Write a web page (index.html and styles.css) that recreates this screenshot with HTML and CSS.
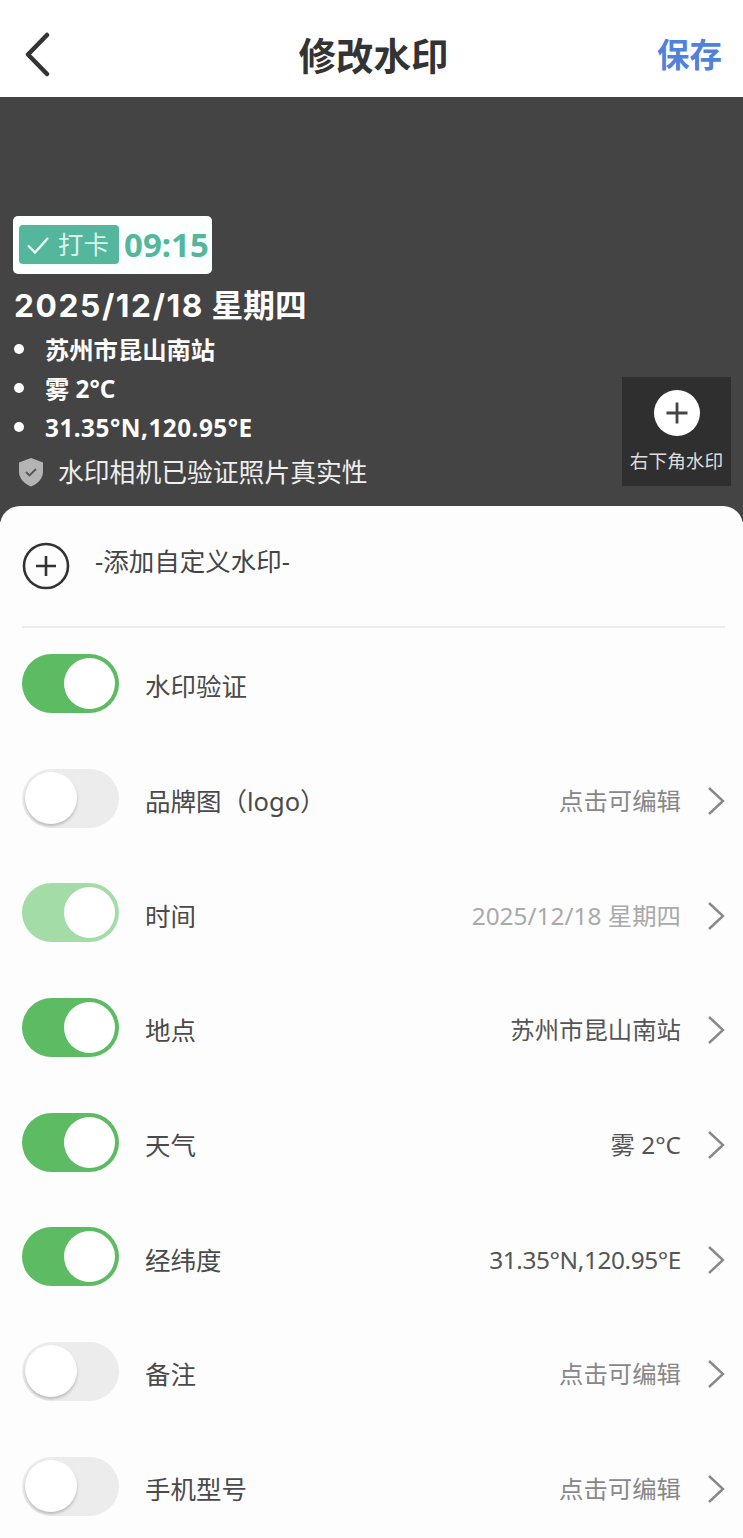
FILE: index.html
```html
<!DOCTYPE html>
<html lang="zh">
<head>
<meta charset="utf-8">
<title>修改水印</title>
<link rel="stylesheet" href="styles.css">
</head>
<body>
<div class="page">
  <header class="topbar">
    <svg class="back" viewBox="0 0 30 46" width="30" height="46"><path d="M25 4 L6 23.500 L25 43" fill="none" stroke="#333" stroke-width="4.500" stroke-linecap="round" stroke-linejoin="round"/></svg>
    <h1 class="title">修改水印</h1>
    <span class="save">保存</span>
  </header>
  <section class="preview">
    <div class="stamp">
      <div class="badge">
        <span class="badge-tag">
          <svg viewBox="0 0 28 24" width="28" height="24"><path d="M4 12.500 L11 19.500 L24 5" fill="none" stroke="#eafaf5" stroke-width="2.400"/></svg>
          <span>打卡</span>
        </span>
        <span class="badge-time">09:15</span>
      </div>
      <div class="date"><span class="date-num">2025/12/18</span> 星期四</div>
      <ul class="facts">
        <li>苏州市昆山南站</li>
        <li>雾 2°C</li>
        <li class="coords">31.35°N,120.95°E</li>
      </ul>
      <div class="verified">
        <svg viewBox="0 0 26 30" width="26" height="30"><path d="M13 1 L25 5.500 V15 C25 22 19 27 13 29.500 C7 27 1 22 1 15 V5.500 Z" fill="#b4b4b4"/><path d="M8 15 L11.500 18.500 L18 12" fill="none" stroke="#555" stroke-width="1.800"/></svg>
        <span>水印相机已验证照片真实性</span>
      </div>
    </div>
    <div class="corner">
      <span class="corner-plus"><svg viewBox="0 0 24 24" width="24" height="24"><path d="M12 1.500 V22.500 M1.500 12 H22.500" stroke="#444" stroke-width="2.800"/></svg></span>
      <span class="corner-label">右下角水印</span>
    </div>
  </section>
  <section class="sheet">
    <div class="add-row">
      <svg viewBox="0 0 48 48" width="48" height="48"><circle cx="24" cy="24" r="22" fill="none" stroke="#333" stroke-width="2.600"/><path d="M24 14 V34 M14 24 H34" stroke="#333" stroke-width="2.600"/></svg>
      <span class="add-label">-添加自定义水印-</span>
    </div>
    <div class="rows">
      <div class="row">
        <span class="switch on"><i></i></span><span class="name">水印验证</span>
      </div>
      <div class="row">
        <span class="switch"><i></i></span><span class="name">品牌图（logo）</span>
        <span class="value muted">点击可编辑</span><svg class="chev" viewBox="0 0 18 30" width="18" height="30"><path d="M2 2 L16 15 L2 28" fill="none" stroke="#888" stroke-width="2.400"/></svg>
      </div>
      <div class="row">
        <span class="switch on faded"><i></i></span><span class="name">时间</span>
        <span class="value faint">2025/12/18 星期四</span><svg class="chev" viewBox="0 0 18 30" width="18" height="30"><path d="M2 2 L16 15 L2 28" fill="none" stroke="#888" stroke-width="2.400"/></svg>
      </div>
      <div class="row">
        <span class="switch on"><i></i></span><span class="name">地点</span>
        <span class="value">苏州市昆山南站</span><svg class="chev" viewBox="0 0 18 30" width="18" height="30"><path d="M2 2 L16 15 L2 28" fill="none" stroke="#888" stroke-width="2.400"/></svg>
      </div>
      <div class="row">
        <span class="switch on"><i></i></span><span class="name">天气</span>
        <span class="value">雾 2°C</span><svg class="chev" viewBox="0 0 18 30" width="18" height="30"><path d="M2 2 L16 15 L2 28" fill="none" stroke="#888" stroke-width="2.400"/></svg>
      </div>
      <div class="row">
        <span class="switch on"><i></i></span><span class="name">经纬度</span>
        <span class="value coords-value">31.35°N,120.95°E</span><svg class="chev" viewBox="0 0 18 30" width="18" height="30"><path d="M2 2 L16 15 L2 28" fill="none" stroke="#888" stroke-width="2.400"/></svg>
      </div>
      <div class="row">
        <span class="switch"><i></i></span><span class="name">备注</span>
        <span class="value muted">点击可编辑</span><svg class="chev" viewBox="0 0 18 30" width="18" height="30"><path d="M2 2 L16 15 L2 28" fill="none" stroke="#888" stroke-width="2.400"/></svg>
      </div>
      <div class="row">
        <span class="switch"><i></i></span><span class="name">手机型号</span>
        <span class="value muted">点击可编辑</span><svg class="chev" viewBox="0 0 18 30" width="18" height="30"><path d="M2 2 L16 15 L2 28" fill="none" stroke="#888" stroke-width="2.400"/></svg>
      </div>
    </div>
  </section>
</div>
</body>
</html>
```

FILE: styles.css
```css
* { box-sizing: border-box; }
html, body { margin: 0; padding: 0; }
body {
  width: 743px;
  height: 1538px;
  overflow: hidden;
  background: #fdfdfd;
  font-family: "Noto Sans", "Noto Sans CJK SC", sans-serif;
  color: #444;
}
.page { display: flex; flex-direction: column; height: 1538px; }

.topbar {
  height: 97px;
  flex: none;
  background: #fff;
  display: flex;
  align-items: center;
  justify-content: space-between;
  padding: 14px 21px 0 22px;
  position: relative;
}
.title {
  position: absolute;
  left: 4px;
  right: 0;
  top: 31px;
  margin: 0;
  text-align: center;
  font-size: 37.500px;
  line-height: 50px;
  font-weight: 700;
  color: #333;
  pointer-events: none;
}
.save { font-size: 32.500px; line-height: 44px; font-weight: 700; color: #5082dc; margin-top: -2px; }
.back { margin-top: -4px; }

.preview {
  height: 425px;
  flex: none;
  background: #444444;
  position: relative;
  padding: 119px 0 0 13px;
}
.stamp { display: flex; flex-direction: column; align-items: flex-start; }
.badge {
  width: 199px;
  height: 58px;
  background: #fbfffe;
  border-radius: 5px;
  padding: 9px 0 0 6px;
  display: flex;
  align-items: flex-start;
  gap: 5px;
}
.badge-tag {
  width: 100px;
  height: 39px;
  background: #54b79d;
  border-radius: 4px;
  display: flex;
  align-items: center;
  gap: 6px;
  padding-left: 5px;
  color: #d9f3ea;
  font-size: 25.500px;
  line-height: 39px;
}
.badge-time {
  font-size: 33px;
  line-height: 39px;
  font-weight: 700;
  color: #54b79d;
}
.date {
  margin-top: 12px;
  margin-left: 1px;
  font-family: Inter, "Noto Sans CJK SC", sans-serif;
  font-size: 31.700px;
  line-height: 40px;
  font-weight: 700;
  color: #fff;
}
.date-num { letter-spacing: 1.600px; }
.facts { list-style: none; margin: 4px 0 0; padding: 0; }
.facts li {
  position: relative;
  padding-left: 32px;
  font-size: 24.300px;
  line-height: 39px;
  height: 39px;
  font-weight: 700;
  color: #fff;
}
.facts li::before {
  content: "";
  position: absolute;
  left: 1px;
  top: 14px;
  width: 10px;
  height: 10px;
  border-radius: 50%;
  background: #fff;
}
.facts .coords { letter-spacing: 0.500px; }
.verified {
  margin-top: 3px;
  display: flex;
  align-items: center;
  gap: 14px;
  padding-left: 5px;
  font-size: 25.800px;
  line-height: 44px;
  color: #eee;
}
.corner {
  position: absolute;
  left: 622px;
  top: 280px;
  width: 109px;
  height: 109px;
  background: #2f2f2f;
  display: flex;
  flex-direction: column;
  align-items: center;
  padding-top: 13px;
}
.corner-plus {
  width: 46px;
  height: 46px;
  border-radius: 50%;
  background: #fff;
  display: flex;
  align-items: center;
  justify-content: center;
}
.corner-label { margin-top: 12px; font-size: 18.700px; line-height: 26px; color: #ddd; white-space: nowrap; }

.sheet {
  flex: 1;
  margin-top: -16px;
  background: #fdfdfd;
  border-radius: 20px 20px 0 0;
  padding: 0 18px 0 22px;
  position: relative;
}
.add-row {
  height: 122px;
  border-bottom: 2px solid #ececec;
  display: flex;
  align-items: center;
  gap: 25px;
}
.add-label { font-size: 25.500px; line-height: 34px; color: #444; margin-top: -10px; }
.rows { display: flex; flex-direction: column; padding-top: 1px; }
.row {
  height: 114.700px;
  display: flex;
  align-items: center;
  flex: none;
}
.switch {
  width: 97px;
  height: 59px;
  flex: none;
  border-radius: 30px;
  background: #ececec;
  position: relative;
  margin: -6px 26px 0 0;
}
.switch i {
  position: absolute;
  left: 3px;
  top: 3px;
  width: 52px;
  height: 52px;
  border-radius: 50%;
  background: #fff;
  box-shadow: 0 2px 3px rgba(0,0,0,.22);
}
.switch.on { background: #5cbb63; }
.switch.on i { left: 42px; top: 4px; width: 51px; height: 51px; box-shadow: none; }
.switch.faded { background: #a4dca8; }
.name { font-size: 25.500px; line-height: 36px; color: #4a4a4a; flex: 1; }
.value { font-size: 24.400px; line-height: 36px; color: #555; margin-right: 26px; }
.value.muted { color: #888; }
.value.faint { color: #aaa; }
.value.coords-value { letter-spacing: -0.400px; }
.chev { flex: none; }
```
